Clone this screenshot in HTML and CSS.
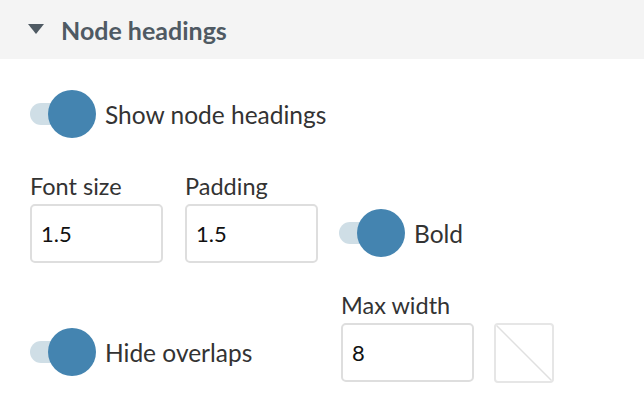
FILE: index.html
```html
<!DOCTYPE html>
<html>
<head>
<meta charset="utf-8">
<link rel="stylesheet" href="styles.css">
</head>
<body>
<div class="panel">
  <div class="header">
    <svg class="caret" width="16" height="10" viewBox="0 0 16 10"><polygon points="0,0 16,0 8,10" fill="#4f5a63"/></svg>
    <span class="title">Node headings</span>
  </div>
  <div class="content">
    <div class="row-toggle">
      <div class="toggle"><div class="track"></div><div class="knob"></div></div>
      <span class="tlabel">Show node headings</span>
    </div>
    <div class="grid">
      <div class="field">
        <label class="flabel">Font size</label>
        <div class="input">1.5</div>
      </div>
      <div class="field">
        <label class="flabel">Padding</label>
        <div class="input">1.5</div>
      </div>
      <div class="field-toggle">
        <div class="toggle"><div class="track"></div><div class="knob"></div></div>
        <span class="tlabel">Bold</span>
      </div>
    </div>
    <div class="grid grid2">
      <div class="field-toggle">
        <div class="toggle"><div class="track"></div><div class="knob"></div></div>
        <span class="tlabel">Hide overlaps</span>
      </div>
      <div class="field">
        <label class="flabel">Max width</label>
        <div class="input-row">
          <div class="input">8</div>
          <div class="swatch">
            <svg width="60" height="60" viewBox="0 0 60 60"><line x1="1" y1="1" x2="59" y2="59" stroke="#e0e0e0" stroke-width="1.5"/></svg>
          </div>
        </div>
      </div>
    </div>
  </div>
</div>
</body>
</html>
```
FILE: styles.css
```css
* { box-sizing: border-box; }
body {
  margin: 0;
  background: #fff;
  font-family: "Lato", "Open Sans", sans-serif;
  color: #333;
}
.panel { width: 644px; height: 412px; }
.header {
  height: 59px;
  background: #f4f4f4;
  display: flex;
  align-items: center;
  padding-left: 28px;
}
.caret { margin-right: 17px; margin-top: -2px; }
.title {
  font-size: 25px;
  font-weight: 700;
  color: #4f5a63;
}
.content { padding: 31px 0 0 30px; }
.row-toggle {
  display: flex;
  align-items: center;
  height: 48px;
}
.toggle {
  position: relative;
  width: 66px;
  height: 48px;
  flex: none;
  margin-right: 9px;
}
.track {
  position: absolute;
  left: 0;
  top: 13px;
  width: 50px;
  height: 22px;
  border-radius: 11px;
  background: #cfdee6;
}
.knob {
  position: absolute;
  left: 18px;
  top: 0;
  width: 48px;
  height: 48px;
  border-radius: 50%;
  background: #4484b0;
}
.tlabel { font-size: 24.5px; color: #333; }
.grid {
  display: grid;
  grid-template-columns: 133px 133px auto;
  column-gap: 22px;
  margin-top: 33px;
  align-items: end;
}
.grid2 {
  grid-template-columns: 289px auto;
  margin-top: 27px;
}
.field { display: flex; flex-direction: column; }
.flabel {
  font-size: 23.5px;
  line-height: 30px;
  height: 30px;
  margin-bottom: 3px;
}
.input {
  width: 133px;
  height: 59px;
  border: 2px solid #dedede;
  border-radius: 5px;
  padding-left: 9px;
  display: flex;
  align-items: center;
  font-size: 22px;
  color: #111;
}
.field-toggle {
  display: flex;
  align-items: center;
  height: 48px;
  margin-left: -1px;
  margin-bottom: 6px;
}
.grid2 .field-toggle { margin-left: 0; margin-bottom: 7px; }
.input-row { display: flex; gap: 20px; }
.swatch {
  width: 60px;
  height: 60px;
  border: 2px solid #e6e6e6;
  border-radius: 4px;
  overflow: hidden;
  position: relative;
}
.swatch svg { position: absolute; left: -2px; top: -2px; }
```
